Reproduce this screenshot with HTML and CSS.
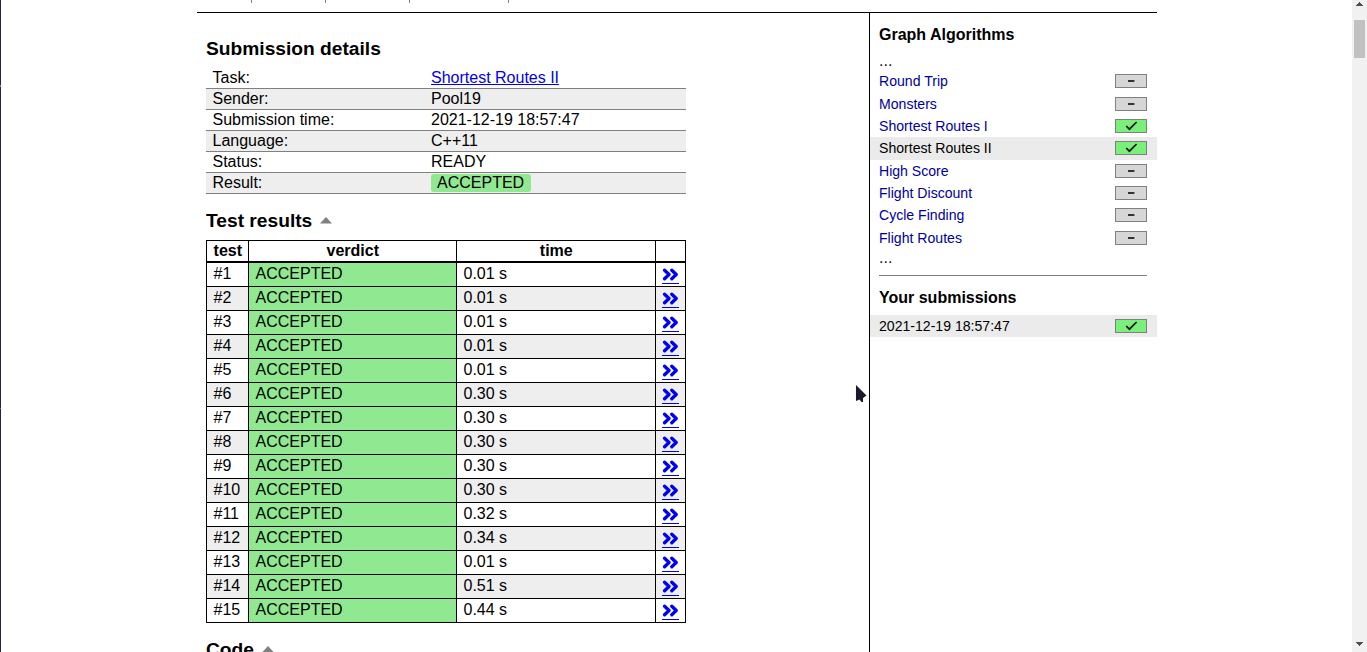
FILE: index.html
```html
<!DOCTYPE html>
<html lang="en">
<head>
<meta charset="utf-8">
<title>Submission details</title>
<link rel="stylesheet" href="styles.css">
</head>
<body>
<svg class="defs" width="0" height="0">
  <symbol id="next" viewBox="0 0 17 13"><path d="M2.6 2.2L7 6.5L2.6 10.8M9.8 2.2L14.2 6.5L9.8 10.8" fill="none" stroke="#00e" stroke-width="3.3" stroke-linecap="round" stroke-linejoin="round"/></symbol>
  <symbol id="check" viewBox="0 0 30 12"><path d="M10.2 6L13.4 9.2L20.6 2" fill="none" stroke="#111" stroke-width="1.7"/></symbol>
  <symbol id="dash" viewBox="0 0 30 12"><path d="M12 6H18.4" fill="none" stroke="#333" stroke-width="2"/></symbol>
  <symbol id="caret" viewBox="0 0 12 7"><path d="M0 6.5L6 0L12 6.5Z" fill="#808080"/></symbol>
</svg>
<div class="screen">
  <div class="edge"><i class="notch"></i><i class="mark"></i></div>
  <div class="page">
    <nav class="tabs"><i></i><i></i><i></i><i></i></nav>
    <div class="columns">
      <main class="content">
        <h2>Submission details</h2>
        <dl class="summary">
          <div><dt>Task:</dt><dd><a href="#">Shortest Routes II</a></dd></div>
          <div><dt>Sender:</dt><dd>Pool19</dd></div>
          <div><dt>Submission time:</dt><dd>2021-12-19 18:57:47</dd></div>
          <div><dt>Language:</dt><dd>C++11</dd></div>
          <div><dt>Status:</dt><dd>READY</dd></div>
          <div><dt>Result:</dt><dd><span class="verdict">ACCEPTED</span></dd></div>
        </dl>
        <h2 class="results-title">Test results <svg class="caret"><use href="#caret"/></svg></h2>
        <table class="results">
          <thead><tr><th class="c1">test</th><th class="c2">verdict</th><th class="c3">time</th><th class="c4"></th></tr></thead>
          <tbody id="tests"></tbody>
        </table>
        <h2 class="code-title">Code <svg class="caret"><use href="#caret"/></svg></h2>
      </main>
      <aside class="sidebar">
        <h4>Graph Algorithms</h4>
        <div class="more">...</div>
        <div class="item"><a>Round Trip</a><svg class="state"><use href="#dash"/></svg></div>
        <div class="item"><a>Monsters</a><svg class="state"><use href="#dash"/></svg></div>
        <div class="item"><a>Shortest Routes I</a><svg class="state full"><use href="#check"/></svg></div>
        <div class="item current"><a>Shortest Routes II</a><svg class="state full"><use href="#check"/></svg></div>
        <div class="item"><a>High Score</a><svg class="state"><use href="#dash"/></svg></div>
        <div class="item"><a>Flight Discount</a><svg class="state"><use href="#dash"/></svg></div>
        <div class="item"><a>Cycle Finding</a><svg class="state"><use href="#dash"/></svg></div>
        <div class="item"><a>Flight Routes</a><svg class="state"><use href="#dash"/></svg></div>
        <div class="more last">...</div>
        <hr>
        <h4 class="subs">Your submissions</h4>
        <div class="item current"><a>2021-12-19 18:57:47</a><svg class="state full"><use href="#check"/></svg></div>
      </aside>
    </div>
  </div>
  <div class="scrollbar">
    <svg width="15" height="8"><path d="M4 6V5H5V4H6V3H7V2H8V3H9V4H10V5H11V6Z" fill="#505050"/></svg>
    <div class="thumb"></div>
    <svg class="down" width="15" height="8"><path d="M4 2V3H5V4H6V5H7V6H8V5H9V4H10V3H11V2Z" fill="#505050"/></svg>
  </div>
  <svg class="cursor" width="16" height="24" viewBox="0 0 16 24"><path d="M2 2V18L5.5 16.5L7.5 19H9V15L12.5 12.5Z" fill="#1a1a2c" stroke="#eee" stroke-width="1" paint-order="stroke"/></svg>
</div>
<script src="script.js"></script>
</body>
</html>
```

FILE: styles.css
```css
* { box-sizing: border-box; }
body { margin: 0; background: #fff; color: #000; font: 16px/18px "Liberation Sans", Arial, sans-serif; overflow: hidden; }
.defs { position: absolute; }
.screen { position: relative; display: flex; justify-content: space-between; width: 1367px; height: 652px; overflow: hidden; }
.edge { width: 1px; background: #24243a; display: flex; flex-direction: column; }
.notch { height: 2px; margin-top: 85px; background: #888; }
.mark { height: 1px; margin-top: 321px; background: #8a5cf0; }
.page { width: 960px; margin-left: 196px; margin-right: auto; display: flex; flex-direction: column; }
.tabs { height: 13px; border-bottom: 1px solid #000; display: flex; }
.tabs i { width: 1px; height: 3px; background: #808080; margin-left: 54px; }
.tabs i + i { margin-left: 73px; }
.tabs i:nth-child(3) { margin-left: 83px; }
.tabs i:nth-child(4) { margin-left: 98px; }
.columns { display: flex; height: 639px; }
.content { width: 672px; padding-left: 9px; }
h2 { margin: 0; padding-top: 25px; font-size: 19.2px; line-height: 22px; height: 55px; }
.summary { margin: 0; width: 480px; }
.summary div { display: flex; height: 21px; border-bottom: 1px solid #808080; padding-left: 6.5px; line-height: 19px; }
.summary div:nth-child(even) { background: #eee; }
.summary dt { width: 218.5px; }
.summary dd { margin: 0; }
a[href] { color: #00e; }
.verdict { display: block; width: 100px; margin-top: 1px; padding: 0 6px; height: 18px; line-height: 17px; border-radius: 3px; background: #90e990; }
.results-title { padding-top: 16px; height: 46px; }
.caret { width: 12px; height: 7px; margin-left: 2.4px; vertical-align: 3px; }
.results { width: 480px; table-layout: fixed; border-collapse: separate; border-spacing: 0; border: solid #000; border-width: 1px 0 0 1px; }
.results th { height: 22px; padding: 1px 0 0 0.6px; line-height: 18px; vertical-align: top; border: solid #000; border-width: 0 1px 2px 0; }
.results td { height: 24px; padding: 2px 0 0 6.5px; line-height: 18px; vertical-align: top; border: solid #000; border-width: 0 1px 1px 0; }
.c1 { width: 42px; }
.c2 { width: 208px; }
.c3 { width: 199px; }
.c4 { width: 30px; }
.results tr:nth-child(even) td { background: #eee; }
.results tr td.ok { background: #90e990; }
.results td.go { padding: 5px 0 0 6px; }
.go a { display: block; width: 17px; height: 16px; border-bottom: 1px solid #00e; }
.go svg { display: block; width: 17px; height: 13px; }
.code-title { padding-top: 16px; height: 45px; }
.sidebar { width: 288px; border-left: 1px solid #000; padding: 13px 0 0 0; font-size: 14.08px; }
h4 { margin: 0 0 0 9px; font-size: 16px; line-height: 18px; }
.more { height: 26.3px; padding: 9px 0 0 9px; line-height: 16px; font-size: 16px; color: #111; }
.more.last { height: 25.7px; padding-top: 1px; }
.item { display: flex; justify-content: space-between; align-items: center; height: 22.33px; padding: 0 10px 0 9px; line-height: 22px; color: #00009c; }
.item.current { background: #ebebeb; color: #000; }
.state { width: 32px; height: 14px; border: 1px solid #808080; background: #d6d6d6; }
.state.full { background: #7af07a; }
hr { border: 0; height: 1px; background: #808080; margin: 0 10px 0 9px; }
.subs { margin: 13px 0 8px 9px; }
.scrollbar { width: 15px; background: #f1f1f1; display: flex; flex-direction: column; }
.thumb { width: 11px; height: 38px; margin: 12px 2px 0; background: #c1c1c1; }
.scrollbar .down { margin-top: auto; margin-bottom: 4px; }
.cursor { position: absolute; left: 854px; top: 383px; }
```

FILE: script.js
```js
const times = ['0.01', '0.01', '0.01', '0.01', '0.01', '0.30', '0.30', '0.30', '0.30', '0.30', '0.32', '0.34', '0.01', '0.51', '0.44'];
document.getElementById('tests').innerHTML = times.map((t, i) =>
  `<tr><td>#${i + 1}</td><td class="ok">ACCEPTED</td><td>${t} s</td><td class="go"><a href="#"><svg><use href="#next"/></svg></a></td></tr>`
).join('');
```
